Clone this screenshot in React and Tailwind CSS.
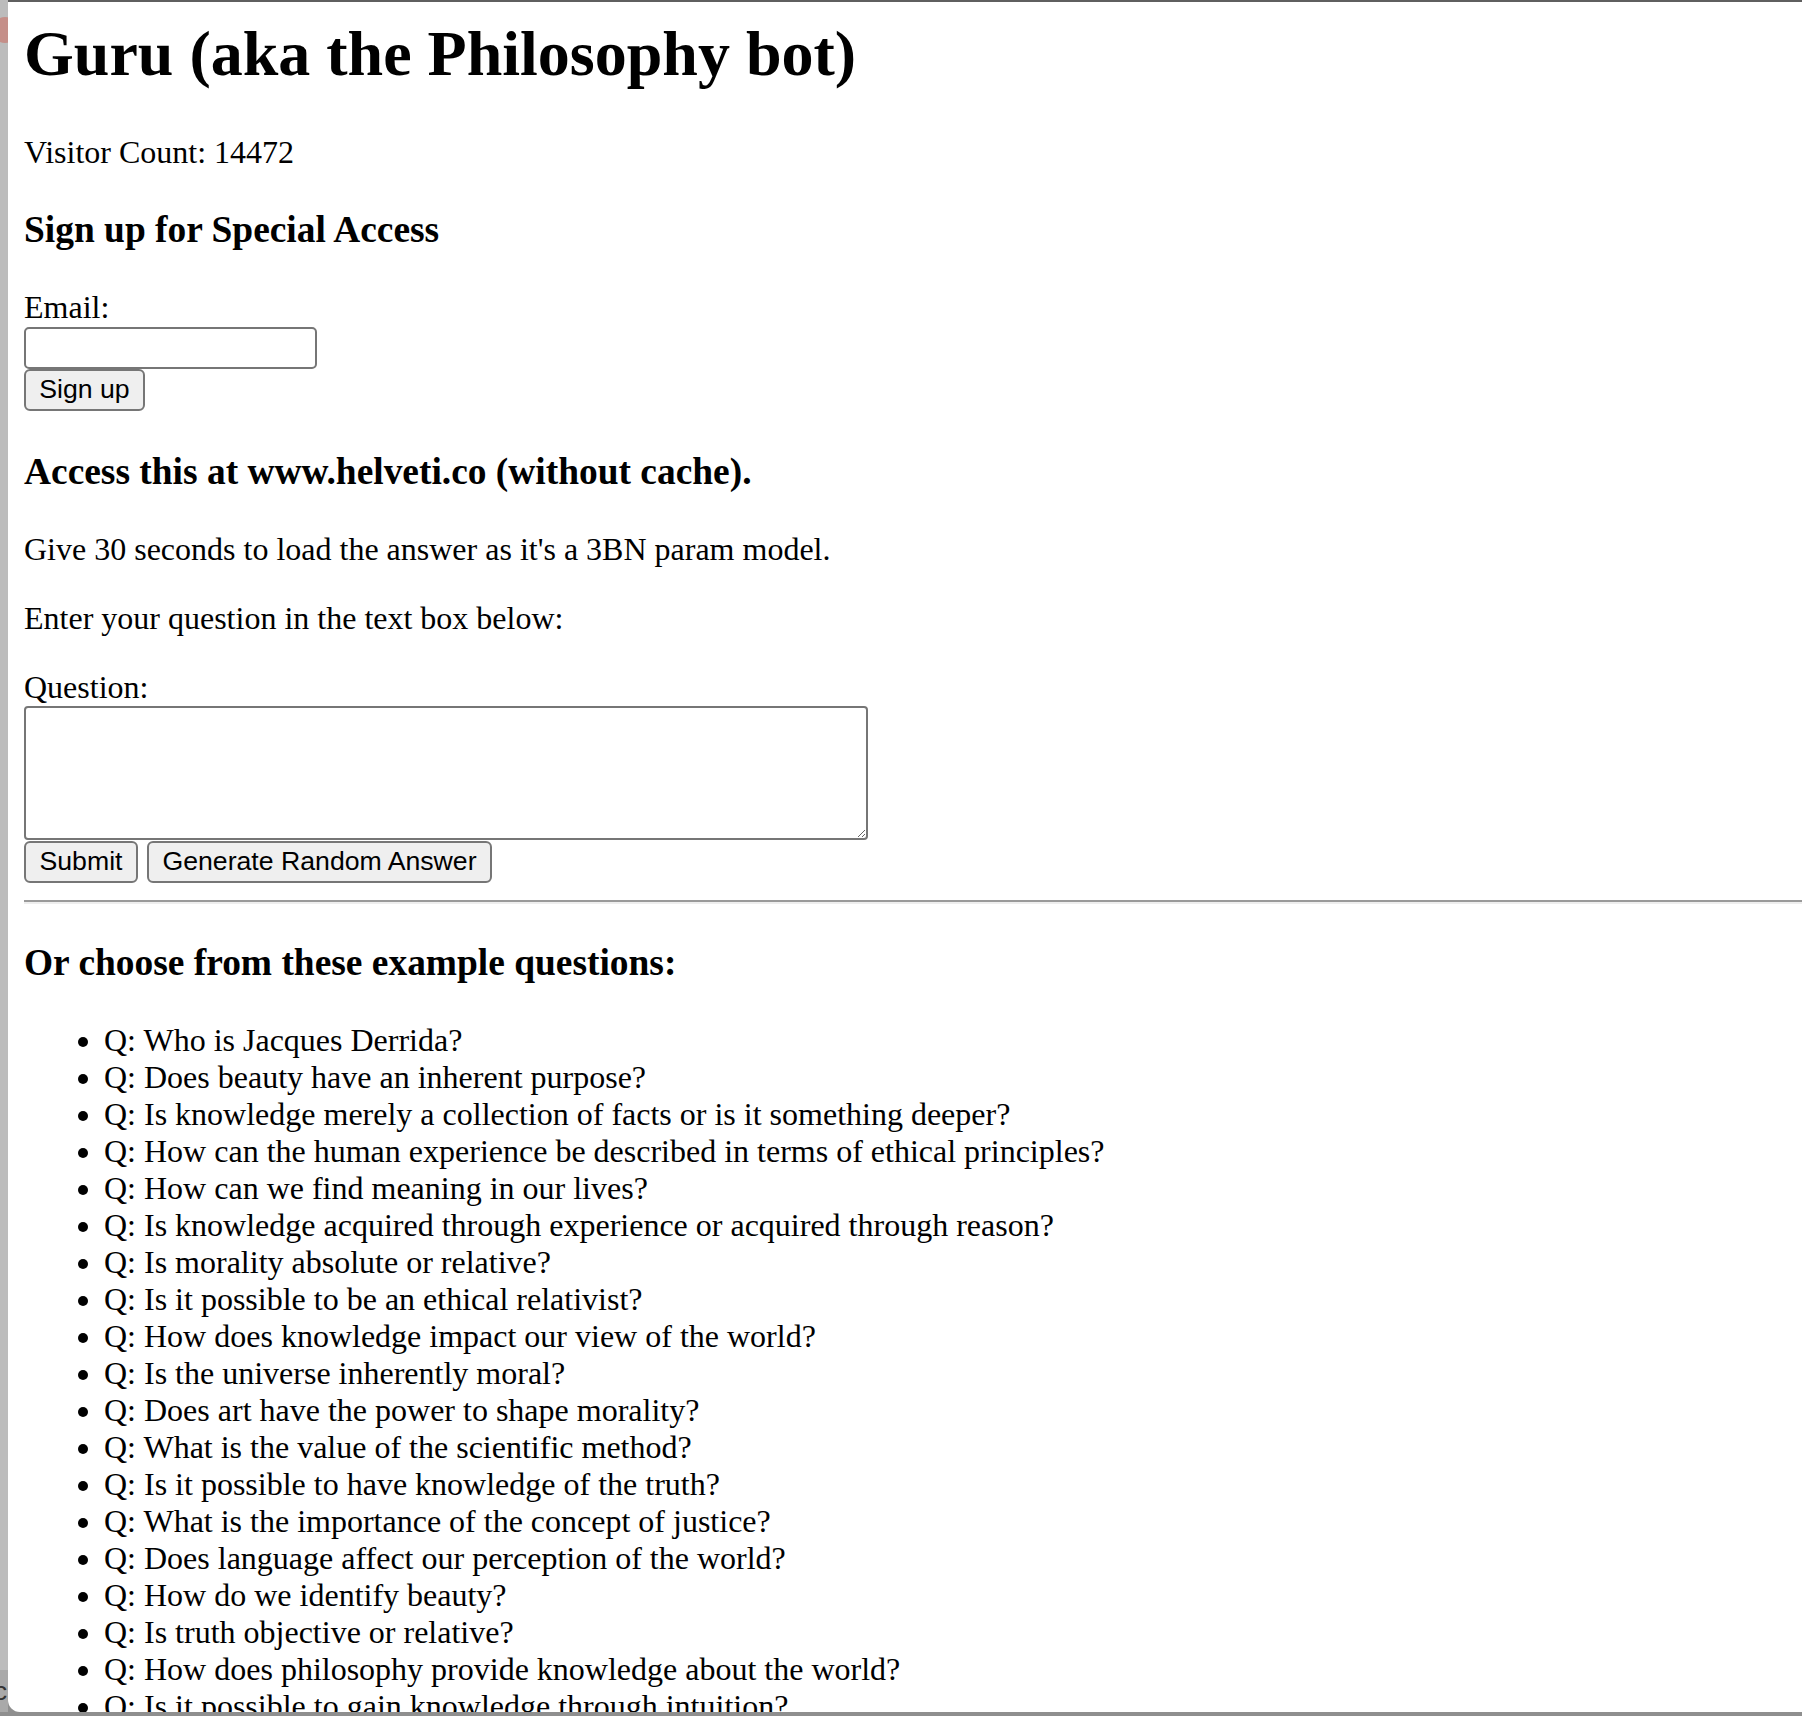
import React from 'react';

const questions = [
  'Who is Jacques Derrida?',
  'Does beauty have an inherent purpose?',
  'Is knowledge merely a collection of facts or is it something deeper?',
  'How can the human experience be described in terms of ethical principles?',
  'How can we find meaning in our lives?',
  'Is knowledge acquired through experience or acquired through reason?',
  'Is morality absolute or relative?',
  'Is it possible to be an ethical relativist?',
  'How does knowledge impact our view of the world?',
  'Is the universe inherently moral?',
  'Does art have the power to shape morality?',
  'What is the value of the scientific method?',
  'Is it possible to have knowledge of the truth?',
  'What is the importance of the concept of justice?',
  'Does language affect our perception of the world?',
  'How do we identify beauty?',
  'Is truth objective or relative?',
  'How does philosophy provide knowledge about the world?',
  'Is it possible to gain knowledge through intuition?',
  'What is the nature of reality?',
];

const btn =
  "h-[42px] bg-[#efefef] border-2 border-[#767676] rounded-[6px] text-[26.67px] text-black font-['Liberation_Sans',Arial,sans-serif] leading-none";

const App = () => {
  return (
    <div className="relative w-[1802px] h-[1716px] overflow-hidden bg-[#8f8f8f]">
      {/* desktop strip behind the window */}
      <div className="absolute left-0 top-0 w-[8px] h-[1670px] bg-[#bcbcbc]" />
      <div className="absolute left-0 top-[1670px] w-[8px] h-[42px] bg-[#a9a9a9]" />
      <div className="absolute left-[-8px] top-[17px] w-[26px] h-[26px] rounded-full bg-[#c58f89]" />
      <div className="absolute left-[-6px] top-[1672px] text-[26px] text-[#333] font-['Liberation_Sans',sans-serif]">c</div>

      {/* browser window */}
      <div className="relative ml-[8px] h-[1712px] bg-white border-t-2 border-[#5f5f5f] rounded-bl-[12px] overflow-hidden font-['Liberation_Serif','Times_New_Roman',serif] text-black text-[32px] leading-[normal]">
        <div className="pl-[16px] pt-[15px]">
          <h1 className="text-[64px] font-bold leading-[normal] mb-[42.88px]">Guru (aka the Philosophy bot)</h1>
          <p className="my-[32px]">Visitor Count: 14472</p>

          <h3 className="text-[37.44px] font-bold leading-[normal] my-[37.44px]">Sign up for Special Access</h3>
          <form onSubmit={(e) => e.preventDefault()} className="pb-[2px]">
            <label className="block">Email:</label>
            <input
              type="email"
              className="block mt-[1px] w-[293px] h-[42px] border-2 border-[#767676] rounded-[5px] bg-white"
            />
            <button type="submit" className={`block w-[121px] ${btn}`}>Sign up</button>
          </form>

          <h3 className="text-[37.44px] font-bold leading-[normal] my-[37.44px]">Access this at www.helveti.co (without cache).</h3>
          <p className="my-[32px]">Give 30 seconds to load the answer as it's a 3BN param model.</p>
          <p className="my-[32px]">Enter your question in the text box below:</p>

          <form onSubmit={(e) => e.preventDefault()}>
            <label className="block">Question:</label>
            <textarea className="block w-[844px] h-[134px] border-2 border-[#767676] rounded-[4px] resize" />
            <div className="flex gap-[9px] mt-[1px]">
              <button type="submit" className={`w-[114px] ${btn}`}>Submit</button>
              <button type="button" className={`w-[345px] ${btn}`}>Generate Random Answer</button>
            </div>
          </form>

          <hr className="mt-[17px] border-t-2 border-b-2 border-t-[#9a9a9a] border-b-[#eeeeee]" />

          <h3 className="text-[37.44px] font-bold leading-[normal] my-[37.44px]">Or choose from these example questions:</h3>
          <ul className="list-disc pl-[80px] my-[37.44px]">
            {questions.map((q, i) => (
              <li key={i}>Q: {q}</li>
            ))}
          </ul>
        </div>
      </div>
    </div>
  );
};

export default App;
